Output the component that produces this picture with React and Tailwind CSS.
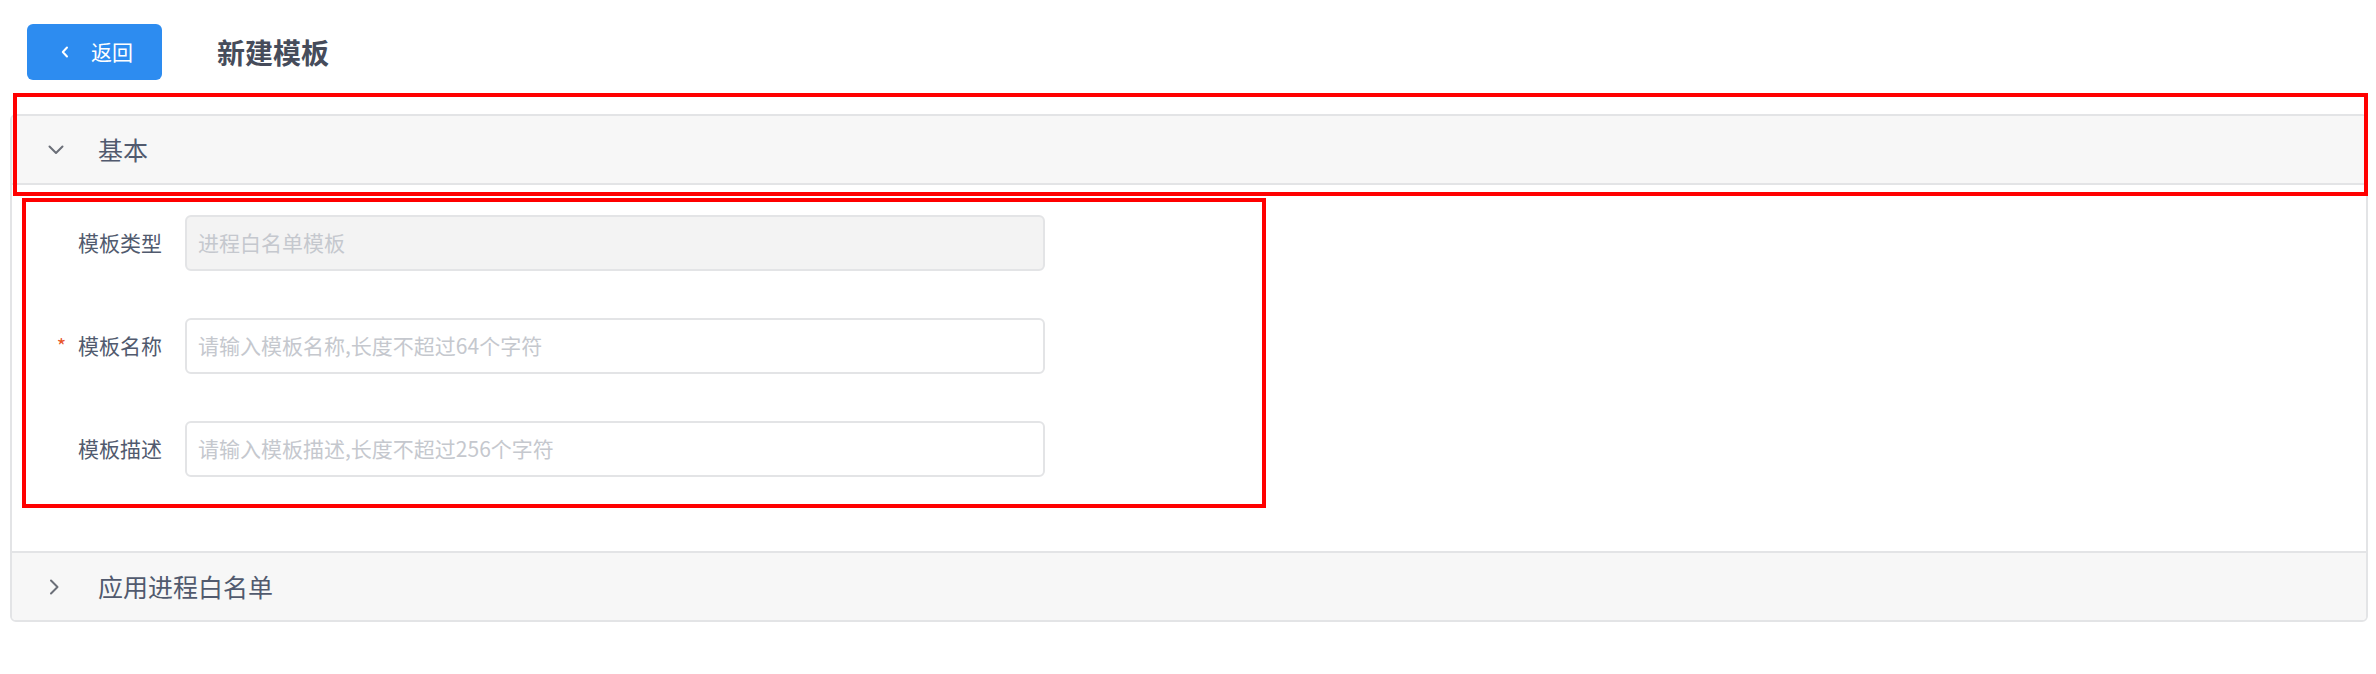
import React from 'react'

const FONT = { fontFamily: '"Noto Sans CJK SC", "Noto Sans", sans-serif' }

const FormRow = ({ label, required, placeholder, disabled }) => (
  <div className="flex items-center h-[56px]">
    <label className="w-[161px] pr-[23px] flex justify-end items-center text-[21px] text-[#515a6e]">
      {required && <span className="text-[#e8552a] mr-[12px] text-[20px]">*</span>}
      {label}
    </label>
    <div
      className={`w-[860px] h-[56px] rounded-[6px] border-2 border-[#e3e4e6] px-[11px] flex items-center text-[21px] text-[#c5c8ce] ${
        disabled ? 'bg-[#f3f3f3]' : 'bg-white'
      }`}
    >
      {placeholder}
    </div>
  </div>
)

const PanelHeader = ({ open, title, top }) => (
  <div
    className={`h-[69px] bg-[#f7f7f7] flex items-center pl-[36px] text-[25px] text-[#515a6e] ${
      top ? 'border-b-2 border-[#e3e4e6]' : 'border-t-2 border-[#e3e4e6]'
    }`}
  >
    <span className="w-[16px] h-[16px] flex items-center justify-center">
      {open ? (
        <svg width="16" height="10" viewBox="0 0 16 10" fill="none">
          <path d="M1.5 1.5 L8 8 L14.5 1.5" stroke="#6b6f78" strokeWidth="2" strokeLinecap="round" strokeLinejoin="round" />
        </svg>
      ) : (
        <svg width="16" height="16" viewBox="0 0 16 16" fill="none">
          <path d="M3 1.5 L9.5 8 L3 14.5" stroke="#6b6f78" strokeWidth="2" strokeLinecap="round" strokeLinejoin="round" />
        </svg>
      )}
    </span>
    <span className="ml-[34px]">{title}</span>
  </div>
)

export default function App() {
  return (
    <div className="relative w-full h-[674px] bg-white pl-[10px] pr-[8px]" style={FONT}>
      {/* top bar */}
      <div className="flex items-center pt-[24px] pl-[17px] h-[80px]">
        <button className="w-[135px] h-[56px] rounded-[6px] bg-[#2d8cf0] text-white flex items-center pl-[34px] text-[21px]">
          <svg width="8" height="12" viewBox="0 0 8 12" fill="none">
            <path d="M6 1.5 L1.8 6 L6 10.5" stroke="white" strokeWidth="2" strokeLinecap="round" strokeLinejoin="round" />
          </svg>
          <span className="ml-[22px]">返回</span>
        </button>
        <h1 className="ml-[55px] text-[28px] font-bold text-[#464c5b]">新建模板</h1>
      </div>

      {/* collapse card */}
      <div className="mt-[34px] border-2 border-[#e3e4e6] rounded-[6px] overflow-hidden">
        <PanelHeader open title="基本" top />
        <div className="pt-[30px] pb-[74px] pl-[12px] flex flex-col gap-[47px]">
          <FormRow label="模板类型" placeholder="进程白名单模板" disabled />
          <FormRow label="模板名称" required placeholder="请输入模板名称,长度不超过64个字符" />
          <FormRow label="模板描述" placeholder="请输入模板描述,长度不超过256个字符" />
        </div>
        <PanelHeader title="应用进程白名单" />
      </div>

      {/* annotation boxes */}
      <div className="absolute left-[13px] top-[93px] w-[2355px] h-[103px] border-4 border-[#ff0000] pointer-events-none" />
      <div className="absolute left-[22px] top-[198px] w-[1244px] h-[310px] border-4 border-[#ff0000] pointer-events-none" />
    </div>
  )
}
